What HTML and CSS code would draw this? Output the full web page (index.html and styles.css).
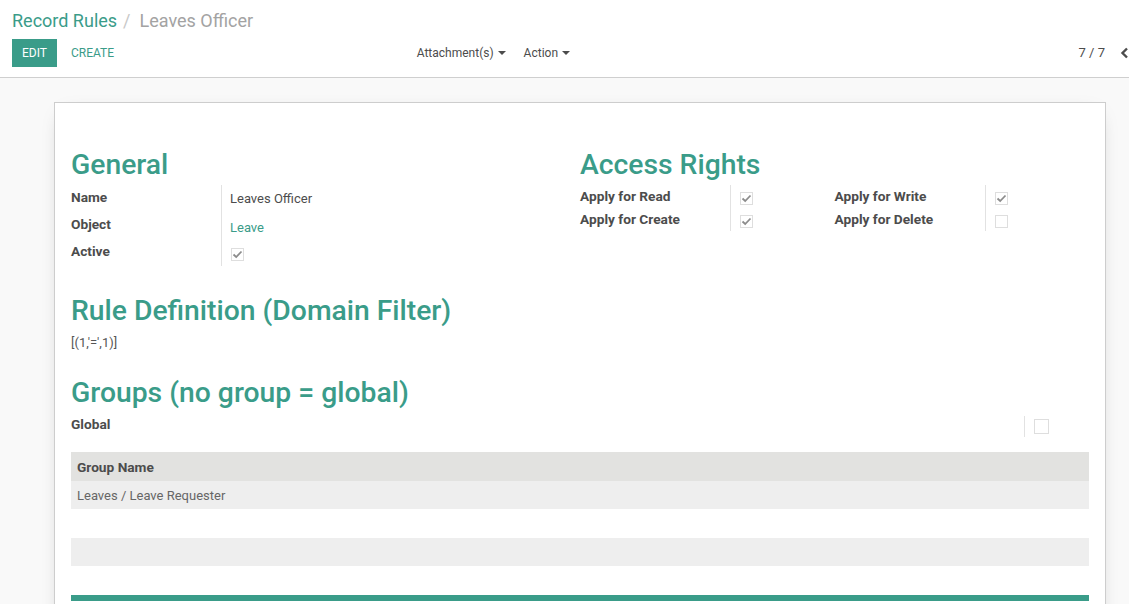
FILE: index.html
```html
<!DOCTYPE html>
<html>
<head>
<meta charset="utf-8">
<link rel="stylesheet" href="styles.css">
</head>
<body>
<div class="cp">
  <div class="breadcrumb">
    <span class="bc-link">Record Rules</span>
    <span class="bc-sep">/</span>
    <span class="bc-active">Leaves Officer</span>
  </div>
  <div class="cp-row">
    <div class="cp-left">
      <div class="cp-buttons">
        <button class="btn btn-primary">Edit</button>
        <button class="btn btn-link">Create</button>
      </div>
      <div class="cp-sidebar">
        <span class="dd">Attachment(s) <span class="caret"></span></span>
        <span class="dd">Action <span class="caret"></span></span>
      </div>
    </div>
    <div class="cp-right">
      <div class="pager">
        <span class="pager-value">7 / 7</span>
        <span class="pager-btn">
          <svg width="9" height="12" viewBox="0 0 9 12"><path d="M7 1.5 L2.5 6 L7 10.5" fill="none" stroke="#4c4c4c" stroke-width="2.4"/></svg>
        </span>
        <span class="pager-btn">
          <svg width="9" height="12" viewBox="0 0 9 12"><path d="M2 1.5 L6.5 6 L2 10.5" fill="none" stroke="#4c4c4c" stroke-width="2.4"/></svg>
        </span>
      </div>
    </div>
  </div>
</div>

<div class="sheet-bg">
  <div class="sheet">
    <div class="groups">
      <div class="group">
        <h2 class="sep">General</h2>
        <div class="fields fields-general">
          <div class="frow"><div class="flabel">Name</div><div class="fvalue">Leaves Officer</div></div>
          <div class="frow"><div class="flabel">Object</div><div class="fvalue link">Leave</div></div>
          <div class="frow"><div class="flabel">Active</div><div class="fvalue fvalue-cb"><span class="cb checked"><svg width="11" height="9" viewBox="0 0 11 9"><path d="M1.5 4.5 L4.2 7 L9.5 1.5" fill="none" stroke="#8c8c8c" stroke-width="1.8"/></svg></span></div></div>
        </div>
      </div>
      <div class="group">
        <h2 class="sep">Access Rights</h2>
        <div class="subgroups">
          <div class="fields fields-access">
            <div class="frow"><div class="flabel">Apply for Read</div><div class="fvalue"><span class="cb checked"><svg width="11" height="9" viewBox="0 0 11 9"><path d="M1.5 4.5 L4.2 7 L9.5 1.5" fill="none" stroke="#8c8c8c" stroke-width="1.8"/></svg></span></div></div>
            <div class="frow"><div class="flabel">Apply for Create</div><div class="fvalue"><span class="cb checked"><svg width="11" height="9" viewBox="0 0 11 9"><path d="M1.5 4.5 L4.2 7 L9.5 1.5" fill="none" stroke="#8c8c8c" stroke-width="1.8"/></svg></span></div></div>
          </div>
          <div class="fields fields-access">
            <div class="frow"><div class="flabel">Apply for Write</div><div class="fvalue"><span class="cb checked"><svg width="11" height="9" viewBox="0 0 11 9"><path d="M1.5 4.5 L4.2 7 L9.5 1.5" fill="none" stroke="#8c8c8c" stroke-width="1.8"/></svg></span></div></div>
            <div class="frow"><div class="flabel">Apply for Delete</div><div class="fvalue"><span class="cb"></span></div></div>
          </div>
        </div>
      </div>
    </div>

    <h2 class="sep sep-rule">Rule Definition (Domain Filter)</h2>
    <div class="domain">[(1,'=',1)]</div>

    <h2 class="sep sep-groups">Groups (no group = global)</h2>
    <div class="global-row">
      <div class="flabel global-label">Global</div>
      <div class="global-value"><span class="cb"></span></div>
    </div>

    <table class="list">
      <thead><tr><th>Group Name</th></tr></thead>
      <tbody>
        <tr class="odd"><td>Leaves / Leave Requester</td></tr>
        <tr><td></td></tr>
        <tr class="odd"><td></td></tr>
      </tbody>
    </table>
    <div class="teal-bar"></div>
  </div>
</div>
</body>
</html>
```

FILE: styles.css
```css
html, body {
  margin: 0;
  padding: 0;
  overflow: hidden;
}
body {
  font-family: Roboto, "Liberation Sans", sans-serif;
  font-size: 13px;
  color: #4c4c4c;
  background: #f9f9f9;
  width: 1129px;
  height: 604px;
}

/* Control panel */
.cp {
  background: #fff;
  height: 78px;
  border-bottom: 1px solid #cfcfcf;
  padding: 6px 0 0 12px;
  box-sizing: border-box;
}
.breadcrumb {
  font-size: 18px;
  line-height: 30px;
  height: 30px;
  display: flex;
}
.bc-link { color: #3a9c89; }
.bc-sep { color: #c8c8c8; padding: 0 9px 0 6px; }
.bc-active { color: #a3a3a3; }

.cp-row {
  display: flex;
  margin-top: 3px;
  height: 28px;
}
.cp-left {
  width: 558px;
  display: flex;
  align-items: center;
}
.cp-buttons { display: flex; align-items: center; }
.btn {
  font-family: Roboto, "Liberation Sans", sans-serif;
  font-size: 12px;
  text-transform: uppercase;
  border: 0;
  height: 28px;
  padding: 0 10px;
  cursor: pointer;
}
.btn-primary {
  background: #3a9c89;
  color: #fff;
  width: 45px;
  padding: 0;
}
.btn-link {
  background: transparent;
  color: #3a9c89;
  margin-left: 4px;
}
.cp-sidebar {
  margin-left: auto;
  display: flex;
  gap: 18px;
  font-size: 12px;
  color: #4c4c4c;
  padding-bottom: 1px;
}
.caret {
  display: inline-block;
  width: 0;
  height: 0;
  border-left: 4px solid transparent;
  border-right: 4px solid transparent;
  border-top: 4px solid #4c4c4c;
  vertical-align: 2px;
  margin-left: 1px;
}
.cp-right {
  flex: 1;
  display: flex;
  justify-content: flex-end;
  margin-right: -41px;
}
.pager {
  display: flex;
  align-items: center;
  font-size: 13px;
  padding-bottom: 1px;
}
.pager-value { margin-right: 15px; }
.pager-btn {
  width: 25px;
  display: flex;
  justify-content: flex-start;
}

/* Sheet */
.sheet-bg {
  padding: 24px 22px 0 54px;
}
.sheet {
  width: 1052px;
  height: 540px;
  box-sizing: border-box;
  background: #fff;
  border: 1px solid #cdcdcd;
  box-shadow: 0 5px 20px -12px rgba(0,0,0,0.4);
  padding: 47px 16px 0 16px;
}
.groups {
  display: flex;
}
.group {
  flex: 1;
}
.sep {
  margin: 0;
  font-size: 28.3px;
  font-weight: 500;
  line-height: 30px;
  color: #3a9c89;
}
.fields {
  margin-top: 5px;
}
.frow {
  display: flex;
}
.flabel {
  width: 150px;
  font-weight: 700;
  font-size: 13.7px;
  color: #4c4c4c;
  flex-shrink: 0;
}
.fvalue {
  border-left: 1px solid #e2e2e2;
  padding-left: 8px;
  display: flex;
  align-items: center;
}
.fields-general .frow { height: 27px; }
.fields-general .flabel { line-height: 24px; }
.fields-general .fvalue { padding-top: 0; }
.fields-general .fvalue.link { color: #3a9c89; padding-top: 3px; }
.fields-general .fvalue-cb { padding-top: 4px; }
.subgroups { display: flex; }
.subgroups .fields { flex: 1; }
.fields-access .frow { height: 23px; }
.fields-access .flabel { line-height: 23px; }
.fields-access .fvalue { padding-top: 3px; }

.cb {
  display: inline-flex;
  align-items: center;
  justify-content: center;
  width: 13px;
  height: 13px;
  border: 1px solid #dedede;
  box-sizing: border-box;
  margin-left: 1px;
}
.cb svg { flex-shrink: 0; }

.sep-rule { margin-top: 30px; }
.domain {
  font-size: 13px;
  line-height: 18px;
  margin-top: 8px;
  color: #555;
}
.sep-groups { margin-top: 26px; }
.global-row {
  display: flex;
  margin-top: 7px;
  height: 24px;
}
.global-label {
  flex: 1;
  line-height: 18px;
}
.global-value {
  width: 56px;
  border-left: 1px solid #e2e2e2;
  padding-left: 8px;
  margin-top: 1px;
  height: 21px;
  display: flex;
  align-items: center;
}
.global-value .cb { width: 15px; height: 15px; }

.list {
  width: 100%;
  border-collapse: collapse;
  margin-top: 13px;
}
.list th {
  background: #e2e2e0;
  text-align: left;
  font-weight: 700;
  font-size: 13.7px;
  height: 29px;
  padding: 0 6px;
  color: #4c4c4c;
}
.list td {
  height: 28px;
  padding: 0 6px;
  color: #666;
}
.list tr:nth-child(2) td { height: 29px; }
.list tr.odd td { background: #eeeeee; }
.teal-bar {
  height: 6px;
  background: #3a9c89;
  margin-top: 29px;
}
```
